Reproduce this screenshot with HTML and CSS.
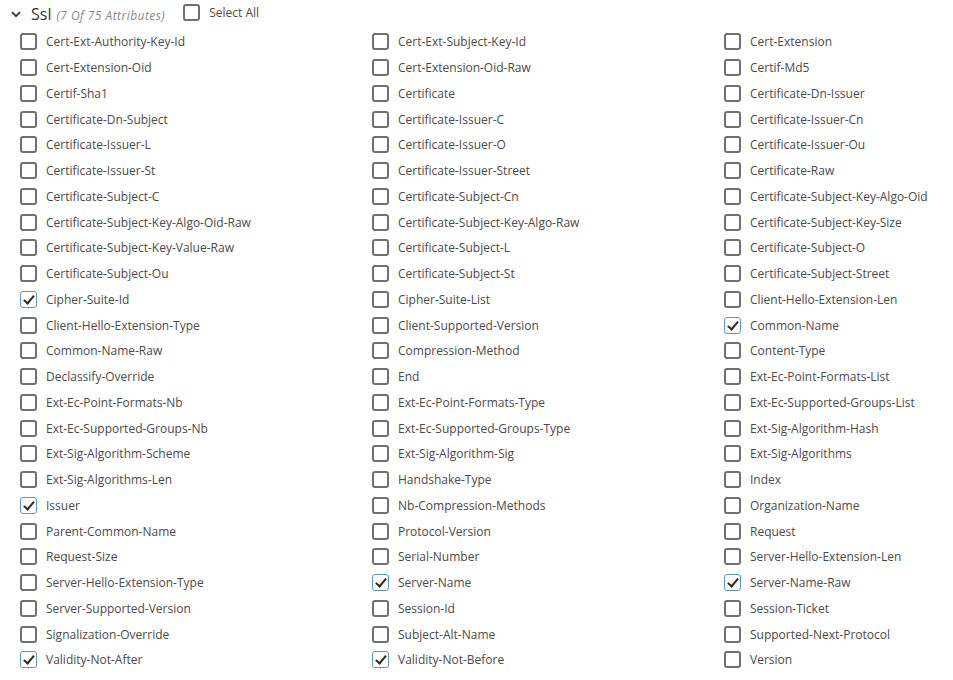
FILE: index.html
```html
<!DOCTYPE html>
<html lang="en">
<head>
    <meta charset="UTF-8">
    <title>Ssl Attributes</title>
    <link rel="stylesheet" href="styles.css">
</head>
<body>

<div class="group">
    <div class="group-head">
        <svg class="chevron" width="10" height="7" viewBox="0 0 10 7"><path d="M1 1.2 L5 5.2 L9 1.2" fill="none" stroke="#333" stroke-width="1.8"/></svg>
        <span class="group-name">Ssl</span>
        <span class="group-count">(7 Of 75 Attributes)</span>
        <label class="check select-all"><span class="box"></span>Select All</label>
    </div>

    <div class="attr-grid">
        <label class="check"><span class="box"></span>Cert-Ext-Authority-Key-Id</label>
        <label class="check"><span class="box"></span>Cert-Ext-Subject-Key-Id</label>
        <label class="check"><span class="box"></span>Cert-Extension</label>
        <label class="check"><span class="box"></span>Cert-Extension-Oid</label>
        <label class="check"><span class="box"></span>Cert-Extension-Oid-Raw</label>
        <label class="check"><span class="box"></span>Certif-Md5</label>
        <label class="check"><span class="box"></span>Certif-Sha1</label>
        <label class="check"><span class="box"></span>Certificate</label>
        <label class="check"><span class="box"></span>Certificate-Dn-Issuer</label>
        <label class="check"><span class="box"></span>Certificate-Dn-Subject</label>
        <label class="check"><span class="box"></span>Certificate-Issuer-C</label>
        <label class="check"><span class="box"></span>Certificate-Issuer-Cn</label>
        <label class="check"><span class="box"></span>Certificate-Issuer-L</label>
        <label class="check"><span class="box"></span>Certificate-Issuer-O</label>
        <label class="check"><span class="box"></span>Certificate-Issuer-Ou</label>
        <label class="check"><span class="box"></span>Certificate-Issuer-St</label>
        <label class="check"><span class="box"></span>Certificate-Issuer-Street</label>
        <label class="check"><span class="box"></span>Certificate-Raw</label>
        <label class="check"><span class="box"></span>Certificate-Subject-C</label>
        <label class="check"><span class="box"></span>Certificate-Subject-Cn</label>
        <label class="check"><span class="box"></span>Certificate-Subject-Key-Algo-Oid</label>
        <label class="check"><span class="box"></span>Certificate-Subject-Key-Algo-Oid-Raw</label>
        <label class="check"><span class="box"></span>Certificate-Subject-Key-Algo-Raw</label>
        <label class="check"><span class="box"></span>Certificate-Subject-Key-Size</label>
        <label class="check"><span class="box"></span>Certificate-Subject-Key-Value-Raw</label>
        <label class="check"><span class="box"></span>Certificate-Subject-L</label>
        <label class="check"><span class="box"></span>Certificate-Subject-O</label>
        <label class="check"><span class="box"></span>Certificate-Subject-Ou</label>
        <label class="check"><span class="box"></span>Certificate-Subject-St</label>
        <label class="check"><span class="box"></span>Certificate-Subject-Street</label>
        <label class="check checked"><span class="box"></span>Cipher-Suite-Id</label>
        <label class="check"><span class="box"></span>Cipher-Suite-List</label>
        <label class="check"><span class="box"></span>Client-Hello-Extension-Len</label>
        <label class="check"><span class="box"></span>Client-Hello-Extension-Type</label>
        <label class="check"><span class="box"></span>Client-Supported-Version</label>
        <label class="check checked"><span class="box"></span>Common-Name</label>
        <label class="check"><span class="box"></span>Common-Name-Raw</label>
        <label class="check"><span class="box"></span>Compression-Method</label>
        <label class="check"><span class="box"></span>Content-Type</label>
        <label class="check"><span class="box"></span>Declassify-Override</label>
        <label class="check"><span class="box"></span>End</label>
        <label class="check"><span class="box"></span>Ext-Ec-Point-Formats-List</label>
        <label class="check"><span class="box"></span>Ext-Ec-Point-Formats-Nb</label>
        <label class="check"><span class="box"></span>Ext-Ec-Point-Formats-Type</label>
        <label class="check"><span class="box"></span>Ext-Ec-Supported-Groups-List</label>
        <label class="check"><span class="box"></span>Ext-Ec-Supported-Groups-Nb</label>
        <label class="check"><span class="box"></span>Ext-Ec-Supported-Groups-Type</label>
        <label class="check"><span class="box"></span>Ext-Sig-Algorithm-Hash</label>
        <label class="check"><span class="box"></span>Ext-Sig-Algorithm-Scheme</label>
        <label class="check"><span class="box"></span>Ext-Sig-Algorithm-Sig</label>
        <label class="check"><span class="box"></span>Ext-Sig-Algorithms</label>
        <label class="check"><span class="box"></span>Ext-Sig-Algorithms-Len</label>
        <label class="check"><span class="box"></span>Handshake-Type</label>
        <label class="check"><span class="box"></span>Index</label>
        <label class="check checked"><span class="box"></span>Issuer</label>
        <label class="check"><span class="box"></span>Nb-Compression-Methods</label>
        <label class="check"><span class="box"></span>Organization-Name</label>
        <label class="check"><span class="box"></span>Parent-Common-Name</label>
        <label class="check"><span class="box"></span>Protocol-Version</label>
        <label class="check"><span class="box"></span>Request</label>
        <label class="check"><span class="box"></span>Request-Size</label>
        <label class="check"><span class="box"></span>Serial-Number</label>
        <label class="check"><span class="box"></span>Server-Hello-Extension-Len</label>
        <label class="check"><span class="box"></span>Server-Hello-Extension-Type</label>
        <label class="check checked"><span class="box"></span>Server-Name</label>
        <label class="check checked"><span class="box"></span>Server-Name-Raw</label>
        <label class="check"><span class="box"></span>Server-Supported-Version</label>
        <label class="check"><span class="box"></span>Session-Id</label>
        <label class="check"><span class="box"></span>Session-Ticket</label>
        <label class="check"><span class="box"></span>Signalization-Override</label>
        <label class="check"><span class="box"></span>Subject-Alt-Name</label>
        <label class="check"><span class="box"></span>Supported-Next-Protocol</label>
        <label class="check checked"><span class="box"></span>Validity-Not-After</label>
        <label class="check checked"><span class="box"></span>Validity-Not-Before</label>
        <label class="check"><span class="box"></span>Version</label>
    </div>
</div>

</body>
</html>
```

FILE: styles.css
```css
/* Global styling */
body {
    font-family: 'Open Sans', 'Noto Sans', sans-serif;
    background-color: #ffffff;
    color: #4a4a4a;
    margin: 0;
    padding: 0;
}

.group {
    padding: 3px 0 0 11px;
}

/* Group header */
.group-head {
    display: flex;
    align-items: center;
    height: 22px;
}

.chevron {
    margin-right: 10px;
}

.group-name {
    font-size: 16px;
    color: #333;
    margin-right: 5px;
}

.group-count {
    font-size: 12px;
    font-style: italic;
    letter-spacing: 0.45px;
    color: #888;
    margin-right: 18px;
    padding-top: 2px;
}

/* Attribute grid */
.attr-grid {
    display: grid;
    grid-template-columns: 352px 352px 229px;
    grid-auto-rows: 25.75px;
    margin-top: 4px;
    padding-left: 9px;
}

/* Checkbox */
.check {
    display: flex;
    align-items: center;
    font-size: 12px;
    color: #4a4a4a;
    white-space: nowrap;
}

.box {
    position: relative;
    box-sizing: border-box;
    width: 17px;
    height: 17px;
    border: 2px solid #707070;
    border-radius: 3px;
    margin-right: 9px;
    flex-shrink: 0;
}

.checked .box {
    border: 1px solid #5b95d6;
}

.checked .box::after {
    content: '';
    position: absolute;
    left: 5px;
    top: 1px;
    width: 4px;
    height: 9px;
    border-right: 2px solid #2b2b2b;
    border-bottom: 2px solid #2b2b2b;
    transform: rotate(40deg);
}

.select-all {
    margin-top: -3px;
}
```
